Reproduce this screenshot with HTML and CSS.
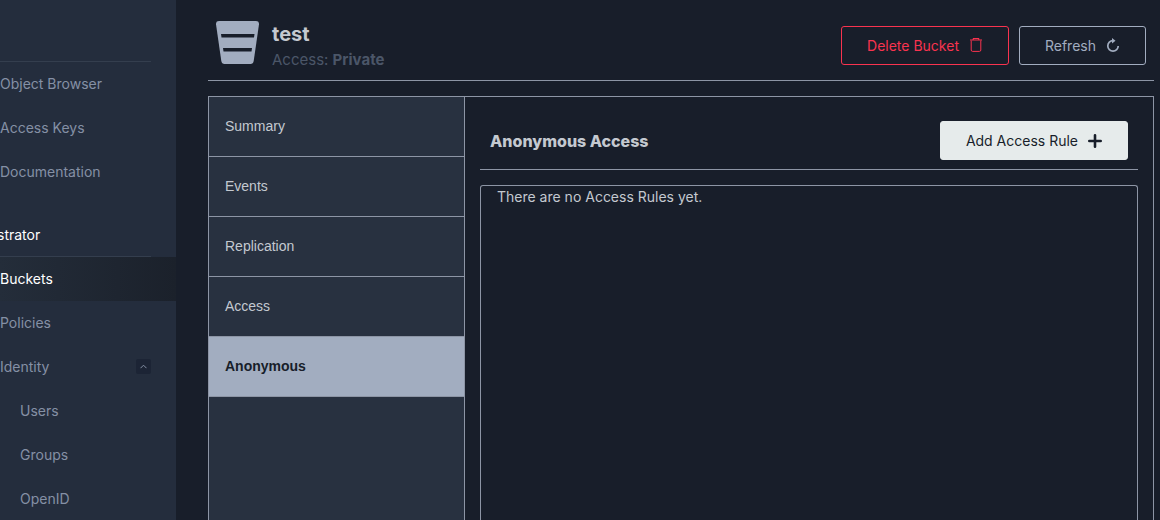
FILE: index.html
```html
<!DOCTYPE html>
<html lang="en">
  <head>
    <meta charset="UTF-8" />
    <meta name="viewport" content="width=device-width, initial-scale=1.0" />
    <title>test</title>
    <link rel="stylesheet" href="styles.css">
  </head>
  <body>
    <div class="app">
      <nav class="sidebar">
        <div class="menu-head"></div>
        <a class="menu-item" href="#">Object Browser</a>
        <a class="menu-item" href="#">Access Keys</a>
        <a class="menu-item" href="#">Documentation</a>
        <div class="menu-title">strator</div>
        <a class="menu-item active" href="#">Buckets</a>
        <a class="menu-item" href="#">Policies</a>
        <a class="menu-item" href="#">
          Identity
          <span class="menu-toggle">
            <svg width="7" height="5" viewBox="0 0 7 5" fill="none" stroke="currentColor"><path d="M0.5 4.2L3.5 1.2L6.5 4.2"/></svg>
          </span>
        </a>
        <a class="menu-item sub" href="#">Users</a>
        <a class="menu-item sub" href="#">Groups</a>
        <a class="menu-item sub" href="#">OpenID</a>
      </nav>

      <main class="main">
        <header class="bucket-header">
          <svg class="bucket-icon" width="43" height="43" viewBox="0 0 43 43">
            <path fill="#a2adc0" d="M3 0H40Q43.300 0 43 3.200L37.700 40Q37.200 43 34.500 43H8.500Q5.800 43 5.300 40L0 3.200Q-.3 0 3 0Z"/>
            <path fill="#181e2a" d="M5 13H38.500L38 16.500H5.500ZM7 27H36L35.500 30.500H7.500Z"/>
          </svg>
          <div class="bucket-info">
            <h1>test</h1>
            <p>Access: <strong>Private</strong></p>
          </div>
          <div class="actions">
            <button class="btn btn-danger">
              Delete Bucket
              <svg width="14" height="14" viewBox="0 0 14 14" fill="none" stroke="currentColor">
                <path d="M1 2H13M4 1.500L4.500 .5H9.500L10 1.500" stroke-width="1.200"/>
                <path d="M2.200 2.500V12Q2.200 13.400 3.600 13.400H10.400Q11.800 13.400 11.800 12V2.500"/>
              </svg>
            </button>
            <button class="btn">
              Refresh
              <svg width="14" height="14" viewBox="0 0 14 14" fill="none" stroke="currentColor">
                <path d="M7 2.700A5.200 5.200 0 1 0 12.200 7.900" stroke-width="1.700"/>
                <path d="M6 0L9.500 2.700L6 5.600Z" fill="currentColor" stroke="none"/>
              </svg>
            </button>
          </div>
        </header>

        <div class="tabs">
          <div class="tab-list">
            <button class="tab">Summary</button>
            <button class="tab">Events</button>
            <button class="tab">Replication</button>
            <button class="tab">Access</button>
            <button class="tab selected">Anonymous</button>
          </div>
          <section class="panel">
            <div class="panel-header">
              <h2>Anonymous Access</h2>
              <button class="btn btn-primary">
                Add Access Rule
                <svg width="14" height="14" viewBox="0 0 14 14" stroke="currentColor" stroke-width="2.600" stroke-linecap="round"><path d="M7 1.300V12.700M1.300 7H12.700"/></svg>
              </button>
            </div>
            <div class="rules">There are no Access Rules yet.</div>
          </section>
        </div>
      </main>
    </div>
  </body>
</html>
```

FILE: styles.css
```css
* {
  box-sizing: border-box;
  margin: 0;
  padding: 0;
}

body {
  background-color: #181e2a;
  color: #c4c9d0;
  font-family: Inter, sans-serif;
  font-size: 14px;
}

.app {
  display: flex;
  height: 100vh;
  overflow: hidden;
}

/* sidebar */
.sidebar {
  width: 176px;
  flex-shrink: 0;
  background-color: #242d3d;
}

.menu-head {
  height: 62px;
  margin-right: 25px;
  border-bottom: 1px solid #343e4e;
}

.menu-item {
  display: flex;
  align-items: center;
  justify-content: space-between;
  height: 44px;
  padding: 0 25px 2px 0;
  color: #8590a5;
  text-decoration: none;
}

.menu-item.active {
  color: #fff;
  background: linear-gradient(90deg, #242d3a, #1b212b);
}

.menu-item.sub {
  padding-left: 20px;
}

.menu-title {
  height: 63px;
  margin-right: 25px;
  padding-top: 32px;
  line-height: 18px;
  text-indent: -3px;
  color: #fff;
  border-bottom: 1px solid #343e4e;
}

.menu-toggle {
  display: flex;
  align-items: center;
  justify-content: center;
  width: 15px;
  height: 15px;
  border-radius: 2px;
  background-color: #1c2435;
}

/* bucket page */
.main {
  flex: 1;
  display: flex;
  flex-direction: column;
  padding: 10px 6px 0 32px;
}

.bucket-header {
  display: flex;
  align-items: center;
  height: 71px;
  padding: 0 8px;
  border-bottom: 1px solid #8d95a5;
}

.bucket-icon {
  margin-bottom: 6px;
}

.bucket-info {
  flex: 1;
  margin-left: 13px;
  padding-top: 2px;
}

.bucket-info h1 {
  font-size: 20px;
  line-height: 28px;
}

.bucket-info p {
  font-size: 15px;
  line-height: 24px;
  color: #4b5668;
}

.actions {
  display: flex;
  gap: 10px;
}

.btn {
  display: flex;
  align-items: center;
  gap: 10px;
  height: 39px;
  padding: 0 25px;
  border: 1px solid #a2adc0;
  border-radius: 3px;
  background: none;
  color: #a2adc0;
  font-family: inherit;
  font-size: 14px;
}

.btn-danger {
  color: #f9334f;
  border-color: #f9334f;
}

.btn-primary {
  color: #181e2a;
  background-color: #e6ebeb;
  border-color: #e6ebeb;
}

.tabs {
  flex: 1;
  display: flex;
  margin-top: 15px;
  border: 1px solid #8d95a5;
  border-bottom: none;
}

.tab-list {
  width: 256px;
  background-color: #283140;
  border-right: 1px solid #8d95a5;
}

.tab {
  display: block;
  width: 100%;
  height: 60px;
  padding: 0 16px 2px;
  border: none;
  border-bottom: 1px solid #8d95a5;
  background: none;
  color: #c4c9d0;
  font-family: "Liberation Sans", Arial, sans-serif;
  font-size: 14px;
  text-align: left;
}

.tab.selected {
  background-color: #a2adc0;
  color: #181e2a;
  font-weight: bold;
}

.panel {
  flex: 1;
  display: flex;
  flex-direction: column;
  padding: 15px 15px 0;
}

.panel-header {
  display: flex;
  align-items: center;
  justify-content: space-between;
  height: 58px;
  padding: 0 10px;
  border-bottom: 1px solid #8d95a5;
}

.panel-header h2 {
  font-size: 16px;
  font-weight: 800;
}

.rules {
  flex: 1;
  margin-top: 15px;
  padding: 0 16px;
  line-height: 22px;
  border: 1px solid #8d95a5;
  border-bottom: none;
  border-radius: 3px 3px 0 0;
}
```
